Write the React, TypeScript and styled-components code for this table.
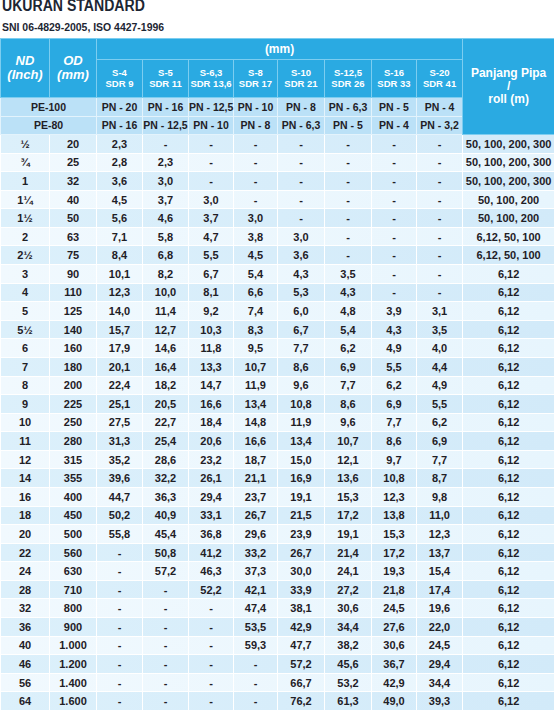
import React from 'react';
import styled, { createGlobalStyle } from 'styled-components';

const GlobalStyle = createGlobalStyle`
  html, body {
    margin: 0;
    padding: 0;
    background: #ffffff;
    font-family: 'Liberation Sans', Arial, sans-serif;
    overflow: hidden;
  }
`;

const Page = styled.div`
  width: 554px;
  height: 711px;
  overflow: hidden;
`;

const Title = styled.h1`
  margin: -2px 0 0 2px;
  font-size: 16px;
  line-height: 16px;
  font-weight: 700;
  color: #1d2633;
  white-space: nowrap;
  transform: scaleX(0.88);
  transform-origin: left center;
`;

const Subtitle = styled.div`
  margin: 7px 0 0 2px;
  height: 15px;
  font-size: 11px;
  line-height: 13px;
  font-weight: 700;
  color: #1d2633;
  white-space: nowrap;
  transform: scaleX(0.95);
  transform-origin: left center;
`;

const Table = styled.table`
  width: 554px;
  border-collapse: collapse;
  table-layout: fixed;
  margin-top: 2px;
`;

const HeadRow = styled.tr<{ $h: number }>`
  height: ${(p) => p.$h}px;
`;

const HeadCell = styled.th<{ $size?: number; $italic?: boolean; $lh?: number }>`
  background: #2aaae2;
  color: #ffffff;
  border: 1px solid #7ccdf0;
  padding: 0;
  font-size: ${(p) => p.$size ?? 12}px;
  line-height: ${(p) => p.$lh ?? 13}px;
  font-style: ${(p) => (p.$italic ? 'italic' : 'normal')};
  font-weight: 700;
  text-align: center;
  vertical-align: middle;
`;

const GradeRow = styled.tr`
  height: 18.5px;
`;

const GradeCell = styled.td`
  background: #bbe1f7;
  color: #1f2026;
  border: 1px solid #e3f3fc;
  padding: 0;
  font-size: 10.5px;
  font-weight: 700;
  text-align: center;
  white-space: nowrap;
`;

const DataRow = styled.tr<{ $dark: boolean }>`
  height: 18.58px;
  background: ${(p) =>
    p.$dark
      ? 'linear-gradient(90deg, #dcf0fb 0%, #d2eaf9 100%)'
      : 'linear-gradient(90deg, #f1f9fe 0%, #e7f5fd 100%)'};
`;

const DataCell = styled.td`
  border: 1px solid #ffffff;
  padding: 0;
  color: #1f2026;
  font-size: 11px;
  font-weight: 700;
  text-align: center;
  white-space: nowrap;
  line-height: 12px;
`;

const widths = [49, 47, 46, 46, 45, 44, 47, 47, 45, 46, 92];

const series = [
  ['S-4', 'SDR 9'],
  ['S-5', 'SDR 11'],
  ['S-6,3', 'SDR 13,6'],
  ['S-8', 'SDR 17'],
  ['S-10', 'SDR 21'],
  ['S-12,5', 'SDR 26'],
  ['S-16', 'SDR 33'],
  ['S-20', 'SDR 41'],
];

const pe100 = ['PN - 20', 'PN - 16', 'PN - 12,5', 'PN - 10', 'PN - 8', 'PN - 6,3', 'PN - 5', 'PN - 4'];
const pe80 = ['PN - 16', 'PN - 12,5', 'PN - 10', 'PN - 8', 'PN - 6,3', 'PN - 5', 'PN - 4', 'PN - 3,2'];

const L1 = '50, 100, 200, 300';
const L2 = '50, 100, 200';
const L3 = '6,12, 50, 100';
const L4 = '6,12';

const rows: string[][] = [
  ['½', '20', '2,3', '-', '-', '-', '-', '-', '-', '-', L1],
  ['¾', '25', '2,8', '2,3', '-', '-', '-', '-', '-', '-', L1],
  ['1', '32', '3,6', '3,0', '-', '-', '-', '-', '-', '-', L1],
  ['1¼', '40', '4,5', '3,7', '3,0', '-', '-', '-', '-', '-', L2],
  ['1½', '50', '5,6', '4,6', '3,7', '3,0', '-', '-', '-', '-', L2],
  ['2', '63', '7,1', '5,8', '4,7', '3,8', '3,0', '-', '-', '-', L3],
  ['2½', '75', '8,4', '6,8', '5,5', '4,5', '3,6', '-', '-', '-', L3],
  ['3', '90', '10,1', '8,2', '6,7', '5,4', '4,3', '3,5', '-', '-', L4],
  ['4', '110', '12,3', '10,0', '8,1', '6,6', '5,3', '4,3', '-', '-', L4],
  ['5', '125', '14,0', '11,4', '9,2', '7,4', '6,0', '4,8', '3,9', '3,1', L4],
  ['5½', '140', '15,7', '12,7', '10,3', '8,3', '6,7', '5,4', '4,3', '3,5', L4],
  ['6', '160', '17,9', '14,6', '11,8', '9,5', '7,7', '6,2', '4,9', '4,0', L4],
  ['7', '180', '20,1', '16,4', '13,3', '10,7', '8,6', '6,9', '5,5', '4,4', L4],
  ['8', '200', '22,4', '18,2', '14,7', '11,9', '9,6', '7,7', '6,2', '4,9', L4],
  ['9', '225', '25,1', '20,5', '16,6', '13,4', '10,8', '8,6', '6,9', '5,5', L4],
  ['10', '250', '27,5', '22,7', '18,4', '14,8', '11,9', '9,6', '7,7', '6,2', L4],
  ['11', '280', '31,3', '25,4', '20,6', '16,6', '13,4', '10,7', '8,6', '6,9', L4],
  ['12', '315', '35,2', '28,6', '23,2', '18,7', '15,0', '12,1', '9,7', '7,7', L4],
  ['14', '355', '39,6', '32,2', '26,1', '21,1', '16,9', '13,6', '10,8', '8,7', L4],
  ['16', '400', '44,7', '36,3', '29,4', '23,7', '19,1', '15,3', '12,3', '9,8', L4],
  ['18', '450', '50,2', '40,9', '33,1', '26,7', '21,5', '17,2', '13,8', '11,0', L4],
  ['20', '500', '55,8', '45,4', '36,8', '29,6', '23,9', '19,1', '15,3', '12,3', L4],
  ['22', '560', '-', '50,8', '41,2', '33,2', '26,7', '21,4', '17,2', '13,7', L4],
  ['24', '630', '-', '57,2', '46,3', '37,3', '30,0', '24,1', '19,3', '15,4', L4],
  ['28', '710', '-', '-', '52,2', '42,1', '33,9', '27,2', '21,8', '17,4', L4],
  ['32', '800', '-', '-', '-', '47,4', '38,1', '30,6', '24,5', '19,6', L4],
  ['36', '900', '-', '-', '-', '53,5', '42,9', '34,4', '27,6', '22,0', L4],
  ['40', '1.000', '-', '-', '-', '59,3', '47,7', '38,2', '30,6', '24,5', L4],
  ['46', '1.200', '-', '-', '-', '-', '57,2', '45,6', '36,7', '29,4', L4],
  ['56', '1.400', '-', '-', '-', '-', '66,7', '53,2', '42,9', '34,4', L4],
  ['64', '1.600', '-', '-', '-', '-', '76,2', '61,3', '49,0', '39,3', L4],
];

function App() {
  return (
    <Page>
      <GlobalStyle />
      <Title>UKURAN STANDARD</Title>
      <Subtitle>SNI 06-4829-2005, ISO 4427-1996</Subtitle>
      <Table>
        <colgroup>
          {widths.map((w, i) => (
            <col key={i} style={{ width: w }} />
          ))}
        </colgroup>
        <thead>
          <HeadRow $h={21}>
            <HeadCell rowSpan={2} $size={13} $lh={14} $italic>
              ND
              <br />
              (Inch)
            </HeadCell>
            <HeadCell rowSpan={2} $size={13} $lh={14} $italic>
              OD
              <br />
              (mm)
            </HeadCell>
            <HeadCell colSpan={8} $size={12}>
              (mm)
            </HeadCell>
            <HeadCell rowSpan={4} $size={12} $lh={13}>
              Panjang Pipa
              <br />
              /
              <br />
              roll (m)
            </HeadCell>
          </HeadRow>
          <HeadRow $h={38}>
            {series.map(([s, sdr]) => (
              <HeadCell key={s} $size={9.5} $lh={10.5}>
                {s}
                <br />
                {sdr}
              </HeadCell>
            ))}
          </HeadRow>
          <GradeRow>
            <GradeCell colSpan={2}>PE-100</GradeCell>
            {pe100.map((v, i) => (
              <GradeCell key={i}>{v}</GradeCell>
            ))}
          </GradeRow>
          <GradeRow>
            <GradeCell colSpan={2}>PE-80</GradeCell>
            {pe80.map((v, i) => (
              <GradeCell key={i}>{v}</GradeCell>
            ))}
          </GradeRow>
        </thead>
        <tbody>
          {rows.map((r, i) => (
            <DataRow key={r[0]} $dark={i % 2 === 0}>
              {r.map((v, j) => (
                <DataCell key={j}>{v}</DataCell>
              ))}
            </DataRow>
          ))}
        </tbody>
      </Table>
    </Page>
  );
}

export default App;
